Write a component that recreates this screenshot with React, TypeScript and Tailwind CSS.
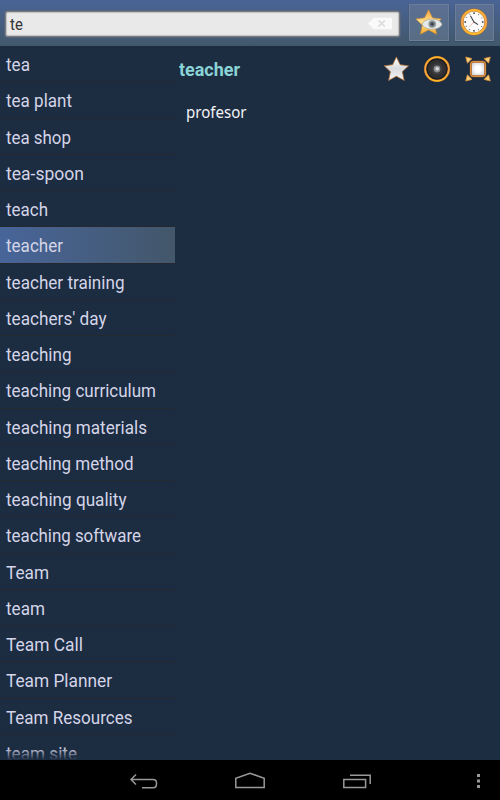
import React from "react";

// Width of each rendered word at the list's type size.
const words: { text: string; width: number }[] = [
  { text: "tea", width: 24 },
  { text: "tea plant", width: 66 },
  { text: "tea shop", width: 65 },
  { text: "tea-spoon", width: 78 },
  { text: "teach", width: 42 },
  { text: "teacher", width: 57 },
  { text: "teacher training", width: 118.5 },
  { text: "teachers' day", width: 100.5 },
  { text: "teaching", width: 65.5 },
  { text: "teaching curriculum", width: 150 },
  { text: "teaching materials", width: 141 },
  { text: "teaching method", width: 127.5 },
  { text: "teaching quality", width: 120.5 },
  { text: "teaching software", width: 135 },
  { text: "Team", width: 43 },
  { text: "team", width: 39 },
  { text: "Team Call", width: 77 },
  { text: "Team Planner", width: 106 },
  { text: "Team Resources", width: 126.5 },
  { text: "team site", width: 71 },
];

const STAR = "M13 1.2 16.8 9 25.2 10.1 19 16 20.8 24.8 13 20.6 5.2 24.8 7 16 .8 10.1 9.2 9Z";

function Gradients() {
  return (
    <svg className="absolute h-0 w-0">
      <defs>
        <linearGradient id="gold" x1="0" y1="0" x2="0" y2="1">
          <stop offset="0" stopColor="#f0a63c" />
          <stop offset=".5" stopColor="#ffe08c" />
          <stop offset="1" stopColor="#f8ad2b" />
        </linearGradient>
        <linearGradient id="silver" x1="0" y1="0" x2="0" y2="1">
          <stop offset="0" stopColor="#ffffff" />
          <stop offset=".5" stopColor="#d9dadd" />
          <stop offset="1" stopColor="#f6f6f6" />
        </linearGradient>
        <linearGradient id="ring" x1="0" y1="0" x2="0" y2="1">
          <stop offset="0" stopColor="#ffb62e" />
          <stop offset=".5" stopColor="#efa04a" />
          <stop offset="1" stopColor="#ffb92c" />
        </linearGradient>
        <radialGradient id="paper">
          <stop offset=".4" stopColor="#ffffff" />
          <stop offset="1" stopColor="#d8d9de" />
        </radialGradient>
        <radialGradient id="iris">
          <stop offset="0" stopColor="#20282e" />
          <stop offset=".4" stopColor="#5b666c" />
          <stop offset="1" stopColor="#b3babc" />
        </radialGradient>
      </defs>
    </svg>
  );
}

function StarEye() {
  return (
    <svg className="h-[28px] w-[28px]" viewBox="0 0 28 28">
      <path d={STAR} transform="translate(0 .5) scale(1.04)" fill="url(#gold)" stroke="#d08a34" strokeWidth=".6" strokeLinejoin="round" />
      <path d="M7.2 16.2C8.2 12.9 12.5 11.2 17 11.2 21.8 11.2 25.8 12.9 27 16.2 25.8 19.6 21.8 21.2 17 21.2 12.5 21.2 8.2 19.5 7.2 16.2Z" fill="#e6e9e9" stroke="#9b9a90" strokeWidth=".6" />
      <circle cx="17.2" cy="16.1" r="4" fill="url(#iris)" />
    </svg>
  );
}

function Clock() {
  return (
    <svg className="h-[28px] w-[28px]" viewBox="0 0 28 28">
      <circle cx="14" cy="14" r="12" fill="#fafafa" stroke="#a96d35" strokeWidth="3.1" />
      <circle cx="14" cy="14" r="11.9" fill="none" stroke="url(#ring)" strokeWidth="2.3" />
      <circle cx="14" cy="14" r="8.8" fill="none" stroke="#777" strokeWidth="1.4" strokeDasharray=".8 3.808" strokeDashoffset=".4" />
      <path d="M14 4.5v1.6M14 21.9v1.6M4.5 14h1.6M21.9 14h1.6" stroke="#444" strokeWidth="1.4" />
      <path d="M14 14 9.1 18.7" stroke="#e9a092" strokeWidth=".7" />
      <path d="M10.4 7.7 14 14 18.1 16.6" fill="none" stroke="#444" strokeWidth="1.1" />
    </svg>
  );
}

function Favorite() {
  return (
    <svg className="h-[28px] w-[28px]" viewBox="0 0 28 28">
      <path d={STAR} transform="translate(.4 .7)" fill="url(#silver)" stroke="#a9672f" strokeWidth=".8" strokeLinejoin="round" />
    </svg>
  );
}

function Speaker() {
  return (
    <svg className="h-[28px] w-[28px]" viewBox="0 0 28 28">
      <circle cx="14" cy="14" r="11.8" fill="#303033" stroke="#a85b13" strokeWidth="2.5" />
      <circle cx="14" cy="14" r="11.8" fill="none" stroke="url(#ring)" strokeWidth="1.8" />
      <circle cx="14" cy="14" r="9.9" fill="none" stroke="#1b1e22" strokeWidth="1.2" />
      <circle cx="14" cy="14" r="6" fill="#3b3b3d" />
      <circle cx="14" cy="14" r="3.4" fill="#8c8d90" />
      <circle cx="14.2" cy="13.8" r="1.8" fill="#d9dadd" />
    </svg>
  );
}

function Expand() {
  return (
    <svg className="h-[28px] w-[28px]" viewBox="0 0 28 28">
      <path d="M1.7 2 8 3.6 3.4 8.2ZM26.3 2 20 3.6 24.6 8.2ZM1.7 26 8 24.4 3.4 19.8ZM26.3 26 20 24.4 24.6 19.8Z" fill="#ffd07c" stroke="#d08a34" strokeWidth=".8" strokeLinejoin="round" />
      <rect x="6.8" y="6.8" width="14.4" height="14.4" rx="2.5" fill="url(#paper)" stroke="#a35f20" strokeWidth="2" />
      <rect x="6.7" y="6.7" width="14.6" height="14.6" rx="2.5" fill="none" stroke="#e99b48" strokeWidth="1" />
    </svg>
  );
}

function Header() {
  return (
    <header className="flex h-[46px] shrink-0 items-center border-b border-[#40576b] bg-linear-to-b from-[#4a6496] to-[#42586c] pr-[6px] pl-[5px]">
      <div className="mt-[2px] flex h-[26px] w-[395px] items-center justify-between rounded-[3px] border border-[#777b80] bg-[#e9e9e9] pr-[6px] pl-[4px] shadow-[inset_0_0_1px_1px_#c3c3c3,0_0_1px_1px_#58657b]">
        <svg className="h-[22px] w-[30px] overflow-visible" viewBox="0 0 30 22">
          <text x="0" y="17" fontSize="16" textLength="12.8" lengthAdjust="spacingAndGlyphs" fill="#333">te</text>
        </svg>
        <svg className="h-[13px] w-[26px]" viewBox="0 0 26 13">
          <path d="M1 6.5 7 .7h17q1 0 1 1v9.6q0 1-1 1H7Z" fill="#fafafa" />
          <path d="m11.5 3.3 6.4 6.4m0-6.4-6.4 6.4" stroke="#dedede" strokeWidth="1.7" />
        </svg>
      </div>
      <div className="mt-[-1px] ml-[9px] flex gap-[6px]">
        <div className="flex h-[37px] w-[39.5px] items-center justify-center border border-[#6a7e98] bg-linear-to-b from-[#5b7094] to-[#586d84] shadow-[0_1px_1px_#3b4e63]"><StarEye /></div>
        <div className="flex h-[37px] w-[39.5px] items-center justify-center border border-[#6a7e98] bg-linear-to-b from-[#5b7094] to-[#586d84] shadow-[0_1px_1px_#3b4e63]"><Clock /></div>
      </div>
    </header>
  );
}

function WordList() {
  return (
    <aside className="relative h-[714px] w-[175px] overflow-hidden">
      {words.map(({ text, width }) => (
        <div key={text} className={`h-[36.25px] border-b border-[#25292f] pl-[6px] ${text === "teacher" ? "bg-linear-to-r from-[#48659a] to-[#43576a]" : ""}`}>
          <svg className="block h-[35px] w-[165px] overflow-visible">
            <text x="0" y="24.5" fontSize="17.7" textLength={width} lengthAdjust="spacingAndGlyphs" fill="#d4d5e8">{text}</text>
          </svg>
        </div>
      ))}
      <div className="absolute inset-x-0 bottom-0 h-[12px] bg-linear-to-b from-transparent to-[#1c2c41]" />
    </aside>
  );
}

function Translation() {
  return (
    <main className="flex-1 pl-[4px]">
      <div className="flex h-[45px] items-center justify-between pr-[8.5px]">
        <svg className="h-[30px] w-[65px]" viewBox="0 0 65 30">
          <text x="0" y="22" fontSize="18.5" fontWeight="700" textLength="61" lengthAdjust="spacingAndGlyphs" fill="#8ad3d6">teacher</text>
        </svg>
        <div className="flex gap-[12.5px]"><Favorite /><Speaker /><Expand /></div>
      </div>
      <svg className="mt-[7px] ml-[7px] h-[30px] w-[75px]" viewBox="0 0 75 30">
        <text x="0" y="20" fontSize="16" textLength="60.5" lengthAdjust="spacingAndGlyphs" fill="#f3f3f8" className="font-['Noto_Sans',sans-serif]">profesor</text>
      </svg>
    </main>
  );
}

function Navigation() {
  return (
    <footer className="h-[40px] bg-black">
      <svg className="h-[40px] w-[500px]" viewBox="0 0 500 40" fill="none" stroke="#999" strokeWidth="1.5">
        <path d="m136 14.5-5 5 5 5M131.5 19.5H153q3.5 0 3.5 3.5v1q0 3.8-3.5 3.8H142" />
        <path d="M235.8 27.5v-9.2L250 13.2l14.2 5.1v9.2Z" />
        <path d="M343.8 19.5h21.8v8h-21.8ZM350 15.3h20.2V24" />
        <path d="M477 14h3v3h-3ZM477 19.5h3v3h-3ZM477 25h3v3h-3Z" fill="#999" stroke="none" />
      </svg>
    </footer>
  );
}

export default function App() {
  return (
    <div className="flex h-[800px] w-[500px] flex-col overflow-hidden bg-[#1c2c41] font-[Roboto,sans-serif]">
      <Gradients />
      <Header />
      <div className="flex h-[714px]"><WordList /><Translation /></div>
      <Navigation />
    </div>
  );
}
